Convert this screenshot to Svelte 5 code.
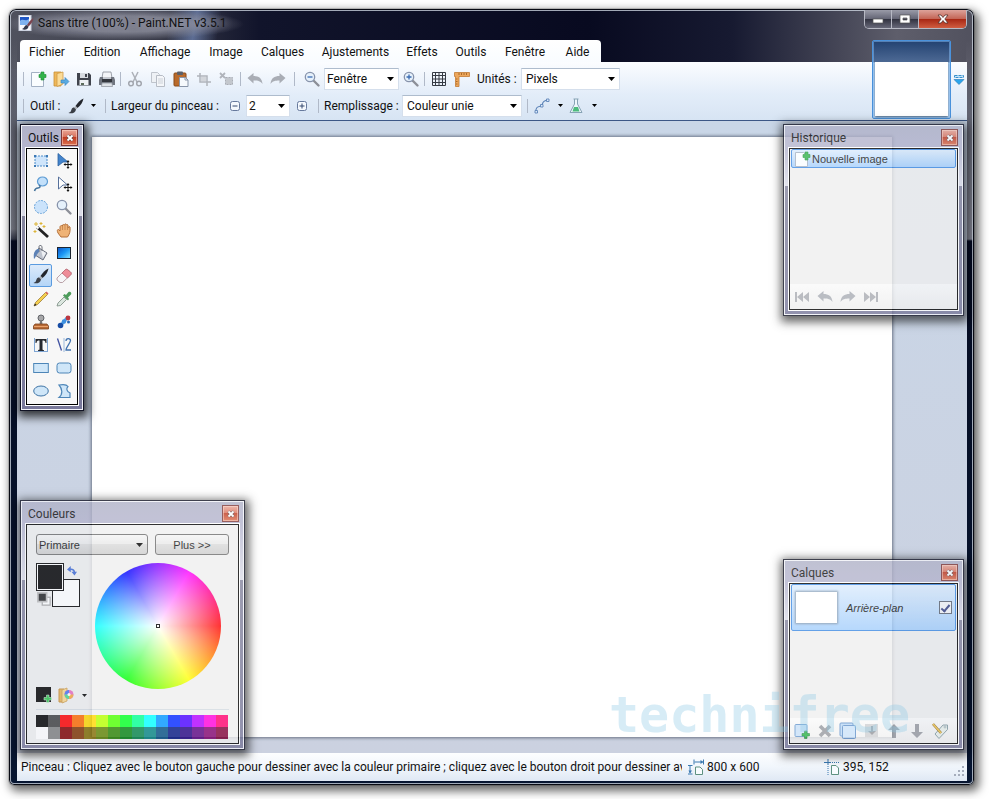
<script lang="ts">
    type Tool = { name: string; icon: string };

    const menus = ['Fichier', 'Edition', 'Affichage', 'Image', 'Calques', 'Ajustements', 'Effets', 'Outils', 'Fenêtre', 'Aide'];

    const tools: Tool[] = [
        { name: 'Sélection rectangulaire', icon: 'rectSelect' },
        { name: 'Déplacer les pixels', icon: 'movePixels' },
        { name: 'Lasso', icon: 'lasso' },
        { name: 'Déplacer la sélection', icon: 'moveSelection' },
        { name: 'Sélection elliptique', icon: 'ellipseSelect' },
        { name: 'Zoom', icon: 'zoom' },
        { name: 'Baguette magique', icon: 'wand' },
        { name: 'Panoramique', icon: 'hand' },
        { name: 'Pot de peinture', icon: 'bucket' },
        { name: 'Dégradé', icon: 'gradient' },
        { name: 'Pinceau', icon: 'brush' },
        { name: 'Gomme', icon: 'eraser' },
        { name: 'Crayon', icon: 'pencil' },
        { name: 'Pipette', icon: 'picker' },
        { name: 'Tampon', icon: 'stamp' },
        { name: 'Recolorer', icon: 'recolor' },
        { name: 'Texte', icon: 'text' },
        { name: 'Ligne ou courbe', icon: 'line' },
        { name: 'Rectangle', icon: 'rect' },
        { name: 'Rectangle arrondi', icon: 'roundRect' },
        { name: 'Ellipse', icon: 'ellipse' },
        { name: 'Forme libre', icon: 'freeform' }
    ];

    const palette = [
        '#000000', '#404040', '#ff0000', '#ff6a00', '#ffd800', '#b6ff00', '#4cff00', '#00ff21',
        '#00ff90', '#00ffff', '#0094ff', '#0026ff', '#4800ff', '#b200ff', '#ff00dc', '#ff006e',
        '#ffffff', '#808080', '#7f0000', '#7f3300', '#7f6a00', '#5b7f00', '#267f00', '#007f0e',
        '#007f46', '#007f7f', '#004a7f', '#00137f', '#21007f', '#57007f', '#7f006e', '#7f0037'
    ];

    const plus = '<path d="M11 1h3v2.500h2v3h-2v2.500h-3v-2.500h-2v-3h2z" fill="#32b44a" stroke="#1c8b32" stroke-width=".6"/>';
    const lens = '<path d="M9.500 9.500l5 5" stroke="#8c8f98" stroke-width="2.400" stroke-linecap="round"/><circle cx="6" cy="6" r="4.700" fill="#e6f1fb" stroke="#8793ab" stroke-width="1.300"/>';
    const cross = '<path d="M12 8v7M8.500 11.500h7" stroke="#111" stroke-width="1"/><path d="M12 7l1.500 2h-3zM12 16l1.500-2h-3zM7.500 11.500l2-1.500v3zM16.500 11.500l-2-1.500v3z" fill="#111"/>';
    const arrowLeft = '<path d="M.5 7l6-5v3c5 0 8.500 2 9 8-2-3-4.500-3.500-9-3.500v3z" fill="#a9adb5"/>';
    const arrowRight = '<path d="M15.500 7l-6-5v3c-5 0-8.500 2-9 8 2-3 4.500-3.500 9-3.500v3z" fill="#a9adb5"/>';
    const brush = '<path d="M15.500.5c-3 1-6 4.500-8 7.500l2 2c3-2.500 5.500-6 6-9.500z" fill="#23262c"/><path d="M7.500 8L6 9.500 8 11.500l1.500-1.500z" fill="#a9adb3"/><path d="M6 9.500c-2.500 0-2.500 2.500-3 3.500-.5 1-1.500 1.500-2.500 2 3 1 7 0 7.500-3.500z" fill="#3b3f46"/>';

    const icons: Record<string, string> = {
        app: '<rect x="1" y=".5" width="12" height="15" fill="#f8f9fc" stroke="#ccd2e0"/><rect x="2" y="2" width="9" height="8" fill="#1f56c4"/><path d="M2 6c3-3 5 1 9-2v6H2z" fill="#7fb3ef"/><path d="M15.500 3c-3 2-5 4.500-6.500 7l1.500 1.500c2.500-2 4.500-5 5-8.500z" fill="#7c4650"/><path d="M9 10c-3 0-2 3-5 4 2 1.500 6 1 6.500-2.500z" fill="#33384a"/>',
        new: '<path d="M1.500 1.500h8l4 4v10h-12z" fill="#fafdff" stroke="#a3b1c4"/>' + plus,
        open: '<path d="M1 1h7v14H1z" fill="#efb85a" stroke="#c98f35" stroke-width=".8"/><path d="M4 2.500l6-1.500v12l-6 2.500z" fill="#fbdc98" stroke="#d09a45" stroke-width=".8"/><path d="M8 9h4V6.500l4 4-4 4V12H8z" fill="#5aaae0" stroke="#2f7fbd" stroke-width=".6"/>',
        save: '<path d="M1 2h12l2 2v10.500H1z" fill="#40444d"/><path d="M4 2h8v5H4z" fill="#d7dbe0"/><path d="M9 3h2v3H9z" fill="#40444d"/><path d="M3.500 9h9v5h-9z" fill="#eef1f4"/><path d="M5 12h3v2H5z" fill="#5c6b5b"/>',
        print: '<path d="M4 1h8l1 6H3z" fill="#f3f5f8" stroke="#868b95" stroke-width=".8"/><path d="M1 6h3v2h8V6h3l1 3v5H0V9z" fill="#70757f"/><path d="M3 8h10v3H3z" fill="#34373e"/><path d="M3 12h10l.5 3.500h-11z" fill="#dfe3e8" stroke="#8a8f99" stroke-width=".7"/>',
        cut: '<path d="M5 1l5 10M11 1L6 11" stroke="#adb1b8" stroke-width="1.500"/><circle cx="4" cy="12.500" r="2.300" fill="none" stroke="#a2a6ae" stroke-width="1.500"/><circle cx="12" cy="12.500" r="2.300" fill="none" stroke="#a2a6ae" stroke-width="1.500"/>',
        copy: '<path d="M1.500 1.500h6l2 2v8h-8z" fill="#eef1f5" stroke="#bfc4cc"/><path d="M6.500 4.500h6l2 2v9h-8z" fill="#f4f6f9" stroke="#b7bcc5"/><path d="M8 8h5M8 10h5M8 12h5" stroke="#ccd1d8"/>',
        paste: '<rect x="1" y="2" width="12" height="13" rx="1" fill="#b96a2b" stroke="#8a4a19"/><rect x="4" y=".5" width="6" height="3.500" rx="1" fill="#5b5f68"/><path d="M6.500 6.500h6l2.500 2.500v6.500H6.500z" fill="#f6f9fc" stroke="#8995a8"/><path d="M12 6.500V9h3" fill="none" stroke="#8995a8"/>',
        crop: '<path d="M4 2v9h11M1 5h10v10" fill="none" stroke="#b0b4bb" stroke-width="1.500"/><path d="M5 6h5v4H5z" fill="#d3d6db"/>',
        deselect: '<path d="M1 2l5 5M6 2L1 7" stroke="#b0b4bb" stroke-width="1.800"/><rect x="6.500" y="6.500" width="7" height="7" fill="#c3c7cd" stroke="#a9adb5" stroke-dasharray="2 1"/>',
        undo: arrowLeft,
        redo: arrowRight,
        zoomOut: lens + '<path d="M3.500 6h5" stroke="#3b6cb3" stroke-width="1.300"/>',
        zoomIn: lens + '<path d="M3.500 6h5M6 3.500v5" stroke="#3b6cb3" stroke-width="1.300"/>',
        grid: '<path d="M1.500 1.500h13v13h-13zM4.500 1v13M8 1v13M11.500 1v13M1 4.500h13M1 8h13M1 11.500h13" fill="none" stroke="#363b44"/>',
        ruler: '<path d="M.5 1.500h15v4H5v10H1.500v-10h-1z" fill="#eda75c" stroke="#c17a33" stroke-width=".8"/><path d="M5 2v2M7.500 2v2M10 2v2M12.500 2v2M2 8h1.500M2 10.500h1.500M2 13h1.500" stroke="#9b5a1c" stroke-width=".8"/>',
        brush,
        curve: '<path d="M2 14C1 7 7 9 8 7.500 9 6 7 3 14 2" fill="none" stroke="#5d84b8" stroke-width="1.200"/><path d="M1 12.500h2.500V15H1zM6.500 6.500H9V9H6.500zM12.500 1H15v2.500h-2.500z" fill="#dceafa" stroke="#5d84b8" stroke-width=".9"/>',
        flask: '<path d="M5.500 1h5M6.500 1v5L2 14.500h12L9.500 6V1" fill="#eef6fb" stroke="#87a3b5"/><path d="M6 9h4l1.500 4.500h-7z" fill="#4dbb7d"/>',
        rectSelect: '<rect x="2" y="3" width="12" height="10" fill="#cfe5fb" stroke="#4b8bc9" stroke-dasharray="2 1"/><path d="M1 2h2v2H1zM13 2h2v2h-2zM1 12h2v2H1zM13 12h2v2h-2z" fill="#3d79b5"/>',
        movePixels: '<path d="M2 .5L12 9H7l-5 4z" fill="#4384cc" stroke="#2b619e" stroke-width=".8"/>' + cross,
        lasso: '<ellipse cx="9.500" cy="5.500" rx="5" ry="4.500" fill="#c3e0fa" stroke="#5d9bd3" stroke-width="1.200"/><path d="M6 9c2 1.500 1 3-1 3s-3 1-3.500 3" fill="none" stroke="#46749c" stroke-width="1.500"/>',
        moveSelection: '<path d="M2.500 1l9 8H7l-4.500 4z" fill="#fff" stroke="#56709b"/>' + cross,
        ellipseSelect: '<circle cx="8" cy="8" r="6.500" fill="#cbe3fb" stroke="#6ca5da" stroke-dasharray="2 1"/>',
        zoom: lens,
        wand: '<path d="M4 5l11 10" stroke="#222" stroke-width="2.800"/><path d="M3.500 4.500l2 2" stroke="#fff" stroke-width="2"/><path d="M3 0v4M1 2h4M8 0v3M6.500 1.500h3M11 3v3M9.500 4.500h3M2 8v3M.5 9.500h3" stroke="#dcb437" stroke-width="1"/>',
        hand: '<path d="M4 9L2.500 7.500C1 7.500 1 9 2 11l3 4h6.500c2-3 3-5 2.500-10-1-1-1.500 0-2 1V3c-1-1-1.500 0-1.500 0-.5-1.500-1.500-1.500-2 0-1-1-2 0-2 0v1C5 3 4 4 4 5z" fill="#efb376" stroke="#b5713a"/><path d="M6.500 4v4M9 3v5M11.500 4v4" stroke="#c38149" stroke-width=".8"/>',
        bucket: '<path d="M6 3l8 5-4 7-8-5z" fill="#bfc4ce" stroke="#696e7b"/><path d="M8 5l5 3-3 5" fill="#eef0f3"/><path d="M6 7V1.500C6 0 9 0 9 2v4" fill="none" stroke="#70757f"/><path d="M6 4C2 4 0 8 1 14c1.500-1 2-4 5-7z" fill="#5d82b6"/>',
        gradient: '<defs><linearGradient id="gr" x1="0" x2="1" y2="1"><stop offset="0" stop-color="#0c50c8"/><stop offset=".5" stop-color="#1b98f5"/><stop offset="1" stop-color="#8ee9ff"/></linearGradient></defs><rect x="1.500" y="2.500" width="13" height="11" fill="url(#gr)" stroke="#1b2430"/>',
        eraser: '<path d="M1 10L9 2c1-1 2-1 3 0l2.500 2c1 1 1 2 0 3l-8 7.500H4L1 12z" fill="#f6f6f8" stroke="#a98c93" stroke-width=".8"/><path d="M6 5l3-3c1-1 2-1 3 0l2.500 2c1 1 1 2 0 3l-3 3z" fill="#ee8c98" stroke="#bd6772" stroke-width=".8"/>',
        pencil: '<path d="M1 15l1.500-3.500L12.500 1.500l2 2L4.500 13.500z" fill="#f5cf4e" stroke="#92702c" stroke-width=".7"/><path d="M12.500 1.500L13.500.5l2 2-1 1z" fill="#da6161"/><path d="M1 15l1-2.500 1.500 1.500z" fill="#222"/>',
        picker: '<path d="M1 15l1-3 6-6 2.500 2.500-6 6z" fill="#dce7e0" stroke="#798a80" stroke-width=".8"/><path d="M7 4.500L12 9.500 13 8l-1-1.500 3-3C16 2 14.500 0 12.500 1L10 4 8.500 3z" fill="#4e9c5c"/>',
        stamp: '<circle cx="8" cy="4" r="3" fill="#a7a7a9" stroke="#63656a"/><path d="M7 6.500h2l.5 4h-3z" fill="#777"/><path d="M2 10h12l1.500 2v3H.5v-3z" fill="#b76a36" stroke="#7f421c" stroke-width=".8"/><path d="M1 12.500h14" stroke="#eaa26b"/>',
        recolor: '<path d="M5 11l6-7" stroke="#4ea2e8" stroke-width="3"/><circle cx="4.500" cy="11.500" r="2.800" fill="#174ca4"/><circle cx="12" cy="4" r="2.400" fill="#bb3740"/><circle cx="8" cy="7.500" r="2.200" fill="#3c8fe0"/><circle cx="12.500" cy="8" r="1.500" fill="#2567b6"/>',
        text: '<path d="M1.500 1v14M14.500 1v14M1 14.500h14" stroke="#7fa6d4"/><path d="M2.500 2h11v4h-1c0-2-1-2.500-3-2.500V12c0 1 .5 1 1.500 1.200v.8H5v-.8c1-.2 1.500-.2 1.500-1.200V3.500c-2 0-3 .5-3 2.500h-1z" fill="#25282e"/>',
        line: '<path d="M1.500 1.500l4 12" stroke="#3d4fa0" stroke-width="1.300"/><path d="M8 1v14" stroke="#9cb9dc"/><path d="M10 4c0-3 4.500-3 4.500-.5C14.500 6 10 10 10 13h5" fill="none" stroke="#4273b0" stroke-width="1.300"/>',
        rect: '<rect x=".7" y="3.500" width="14.600" height="9" fill="#cfe6f8" stroke="#4d85b7"/>',
        roundRect: '<rect x="1" y="3" width="14" height="10" rx="2.500" fill="#cfe6f8" stroke="#4d85b7"/>',
        ellipse: '<ellipse cx="8" cy="8" rx="7.300" ry="5" fill="#cfe6f8" stroke="#3f74a6"/>',
        freeform: '<path d="M3 2c5-1 8 0 9 1.500-2 2-1.500 5 2 6.500v4.500H3C7 11 6.500 6 3 2z" fill="#cfe6f8" stroke="#4d85b7" stroke-width="1.200"/>',
        first: '<path d="M1 3h2v10H1zM9 3v10L3 8zM15 3v10L9 8z" fill="#aaacb2"/>',
        last: '<path d="M13 3h2v10h-2zM7 3v10l6-5zM1 3v10l6-5z" fill="#aaacb2"/>',
        addLayer: '<rect x="1" y="1.500" width="12" height="12" rx="1" fill="#c9e1f8" stroke="#6797cd"/><path d="M10.500 8h2.500v2.500h2.500V13H13v2.500h-2.500V13H8v-2.500h2.500z" fill="#28b447" stroke="#148030" stroke-width=".6"/>',
        delete: '<path d="M3 3l10 10M13 3L3 13" stroke="#989ba1" stroke-width="3.600"/>',
        duplicate: '<rect x="0" y="0" width="13" height="13" rx="1" fill="#bddaf7" stroke="#6292ca"/><rect x="2.500" y="2.500" width="13" height="13" rx="1" fill="#cce3fa" stroke="#6292ca"/>',
        merge: '<path d="M2 1h13v13H2z" fill="#d0d1d4"/><path d="M8 3v5H5l4 4 4-4h-3V3z" fill="#94979c"/>',
        up: '<path d="M8 1l6 6h-4v8H6V7H2z" fill="#989ba1"/>',
        down: '<path d="M8 15l6-6h-4V1H6v8H2z" fill="#989ba1"/>',
        properties: '<path d="M3 11L11 2h4.500v4.500L7 15.500z" fill="#e8f0ea" stroke="#8299a1"/><circle cx="13" cy="4" r="1" fill="#fff" stroke="#8299a1" stroke-width=".7"/><path d="M1 1l8 9" stroke="#90671f" stroke-width="2.600"/><path d="M1 1l8 9" stroke="#f1c84a" stroke-width="1.400"/>',
        addColor: '<path d="M0 0h15v15H0z" fill="#000"/><path d="M10.500 8h2.500v2.500h2.500V13H13v2.500h-2.500V13H8v-2.500h2.500z" fill="#2cc04a" stroke="#d9f7df" stroke-width=".5"/>',
        palette: '<path d="M1 2h5v13H1z" fill="#e9b253" stroke="#c58b33"/><path d="M4 3l5-2v13l-5 2z" fill="#fad88d" stroke="#c99744" stroke-width=".8"/><circle cx="11" cy="7.500" r="4.500" fill="#e96ac0"/><path d="M11 7.500V3a4.500 4.500 0 0 0-4.500 4.500z" fill="#4a70f2"/><path d="M11 7.500H6.500A4.500 4.500 0 0 0 11 12z" fill="#44d98c"/><path d="M11 7.500V12a4.500 4.500 0 0 0 4.500-4.500z" fill="#f4a63c"/><circle cx="11" cy="7.500" r="1.500" fill="#fff"/>',
        size: '<path d="M7.500 8h4.500l2.500 2.500v5h-7z" fill="#f8fcff" stroke="#5e9180"/><path d="M6.500 3h8M6 .5v5M15.500.5v5M2 7v7M0 6.500h4.500M0 15h4.500" stroke="#3b79b0"/><path d="M12.500 1l3 2-3 2zM.5 11.500L2 14.500l2-3z" fill="#3b79b0"/>',
        position: '<path d="M7.500 6.500h4.500l2.500 2.500v6.500h-7z" fill="#f8fcff" stroke="#5e9180"/><path d="M4 0v6M0 3.500h7" stroke="#3b79b0"/><path d="M8 3.500h8M4 7v9" stroke="#3b79b0" stroke-dasharray="1 1"/>',
        swap: '<path d="M4 5.500c4-1 7 1 8 4" fill="none" stroke="#3e69d4" stroke-width="2.500"/><path d="M6 0v10L0 5.500zM7 9h9l-4 6z" fill="#3e69d4"/>',
        reset: '<rect x="6" y="6" width="9" height="9" fill="#fff" stroke="#aaa" stroke-width="1.500"/><rect x="1" y="1" width="10" height="10" fill="#222" stroke="#bbb" stroke-width="2"/>'
    };

    let activeTool = $state('Pinceau');
    let layerVisible = $state(true);
    let zoom = $state('Fenêtre');
    let units = $state('Pixels');
    let brushWidth = $state('2');
    let fill = $state('Couleur unie');
    let slot = $state('Primaire');
</script>

{#snippet icon(name: string)}
    <svg class="icon" viewBox="0 0 16 16" aria-hidden="true">{@html icons[name]}</svg>
{/snippet}

{#snippet iconButton(name: string, label: string)}
    <button class="icon-btn" aria-label={label}>{@render icon(name)}</button>
{/snippet}

{#snippet caret()}
    <svg class="caret" viewBox="0 0 7 4" aria-hidden="true"><path d="M0 0h7L3.500 4z" fill="#000" /></svg>
{/snippet}

{#snippet panelTitle(title: string)}
    <header class="panel-title">
        <h2>{title}</h2>
        <button class="panel-close" aria-label="Fermer {title}">
            <svg viewBox="0 0 8 8"><path d="M1.500 1.500l5 5M6.500 1.500l-5 5" stroke="#534047" stroke-width="3" /><path d="M1.500 1.500l5 5M6.500 1.500l-5 5" stroke="#fff" stroke-width="1.800" /></svg>
        </button>
    </header>
{/snippet}

<div class="desktop">
    <div class="window">
        <header class="titlebar">
            <span class="app-icon">{@render icon('app')}</span>
            <h1>Sans titre (100%) - Paint.NET v3.5.1</h1>
            <div class="window-buttons">
                <button class="win-btn" aria-label="Réduire">
                    <svg viewBox="0 0 14 12"><rect x="2" y="6" width="10" height="4" fill="#fff" stroke="#555" stroke-width=".7" /></svg>
                </button>
                <button class="win-btn" aria-label="Agrandir">
                    <svg viewBox="0 0 14 12"><path d="M2 2h10v8H2zM5 5v2h4V5z" fill="#fff" fill-rule="evenodd" stroke="#555" stroke-width=".7" /></svg>
                </button>
                <button class="win-btn close" aria-label="Fermer">
                    <svg viewBox="0 0 14 12"><path d="M2 2h3l2 2.500L9 2h3L8.800 6l3.200 4H9L7 7.500 5 10H2l3.200-4z" fill="#fff" stroke="#55302c" stroke-width=".8" /></svg>
                </button>
            </div>
        </header>

        <nav class="menu">
            {#each menus as menu}
                <button>{menu}</button>
            {/each}
        </nav>

        <div class="toolbars">
            <div class="toolbar">
                <i class="sep"></i>
                {@render iconButton('new', 'Nouveau')}
                {@render iconButton('open', 'Ouvrir')}
                {@render iconButton('save', 'Enregistrer')}
                {@render iconButton('print', 'Imprimer')}
                <i class="sep"></i>
                {@render iconButton('cut', 'Couper')}
                {@render iconButton('copy', 'Copier')}
                {@render iconButton('paste', 'Coller')}
                {@render iconButton('crop', 'Rogner')}
                {@render iconButton('deselect', 'Désélectionner')}
                <i class="sep"></i>
                {@render iconButton('undo', 'Annuler')}
                {@render iconButton('redo', 'Rétablir')}
                <i class="sep wide"></i>
                {@render iconButton('zoomOut', 'Zoom arrière')}
                <span class="combo zoom-combo">
                    <select bind:value={zoom} aria-label="Zoom"><option>Fenêtre</option><option>100%</option></select>
                    {@render caret()}
                </span>
                {@render iconButton('zoomIn', 'Zoom avant')}
                <i class="sep"></i>
                {@render iconButton('grid', 'Grille')}
                {@render iconButton('ruler', 'Règles')}
                <label class="units-label" for="units">Unités :</label>
                <span class="combo units-combo">
                    <select id="units" bind:value={units}><option>Pixels</option><option>Pouces</option></select>
                    {@render caret()}
                </span>
            </div>
            <div class="toolbar">
                <i class="sep"></i>
                <span class="tool-label">Outil :</span>
                <button class="icon-btn drop" aria-label="Choisir l'outil">{@render icon('brush')}{@render caret()}</button>
                <i class="sep wide"></i>
                <label class="width-label" for="brush-width">Largeur du pinceau :</label>
                <button class="icon-btn" aria-label="Diminuer">
                    <svg class="step" viewBox="0 0 10 10"><rect x=".5" y=".5" width="9" height="9" rx="2" fill="#f4f8fd" stroke="#66799c" /><path d="M2.500 5h5" stroke="#34496f" /></svg>
                </button>
                <span class="combo width-combo">
                    <select id="brush-width" bind:value={brushWidth}><option>1</option><option>2</option><option>3</option></select>
                    {@render caret()}
                </span>
                <button class="icon-btn" aria-label="Augmenter">
                    <svg class="step" viewBox="0 0 10 10"><rect x=".5" y=".5" width="9" height="9" rx="2" fill="#f4f8fd" stroke="#66799c" /><path d="M2.500 5h5M5 2.500v5" stroke="#34496f" /></svg>
                </button>
                <i class="sep wide"></i>
                <label class="fill-label" for="fill">Remplissage :</label>
                <span class="combo fill-combo">
                    <select id="fill" bind:value={fill}><option>Couleur unie</option><option>Hachures</option></select>
                    {@render caret()}
                </span>
                <i class="sep wide"></i>
                <button class="icon-btn drop narrow" aria-label="Anticrénelage">{@render icon('curve')}{@render caret()}</button>
                <button class="icon-btn drop narrow" aria-label="Mode de fusion">{@render icon('flask')}{@render caret()}</button>
            </div>
        </div>

        <div class="image-strip">
            <button class="thumbnail" aria-label="Sans titre"><span></span></button>
            <button class="image-list" aria-label="Liste des images">
                <svg viewBox="0 0 12 10"><path d="M1.500.5h9v2h-9z" fill="#bfe3fb" stroke="#378fcb" stroke-dasharray="3 1" /><path d="M1 4.500h10L6 9.500z" fill="#2ba5ec" stroke="#2173b3" stroke-width=".6" /></svg>
            </button>
        </div>

        <main class="workspace">
            <div class="paper"></div>

            <section class="panel tools-panel">
                {@render panelTitle('Outils')}
                <div class="panel-body tools">
                    {#each tools as tool}
                        <button
                            class="tool"
                            class:active={activeTool === tool.name}
                            aria-label={tool.name}
                            onclick={() => (activeTool = tool.name)}
                        >{@render icon(tool.icon)}</button>
                    {/each}
                </div>
            </section>

            <section class="panel history-panel">
                {@render panelTitle('Historique')}
                <div class="panel-body">
                    <button class="history-item">{@render icon('new')}Nouvelle image</button>
                    <div class="panel-tools">
                        {@render iconButton('first', 'Tout annuler')}
                        {@render iconButton('undo', 'Annuler')}
                        {@render iconButton('redo', 'Rétablir')}
                        {@render iconButton('last', 'Tout rétablir')}
                    </div>
                </div>
            </section>

            <section class="panel colors-panel">
                {@render panelTitle('Couleurs')}
                <div class="panel-body colors">
                    <div class="color-row">
                        <span class="combo slot-combo">
                            <select bind:value={slot} aria-label="Couleur active"><option>Primaire</option><option>Secondaire</option></select>
                            {@render caret()}
                        </span>
                        <button class="more">Plus &gt;&gt;</button>
                    </div>
                    <div class="color-main">
                        <div class="color-side">
                            <div class="swatches">
                                <button class="secondary" aria-label="Couleur secondaire"></button>
                                <button class="primary" aria-label="Couleur primaire"></button>
                                <button class="swap" aria-label="Permuter">{@render icon('swap')}</button>
                                <button class="reset" aria-label="Noir et blanc">{@render icon('reset')}</button>
                            </div>
                            <div class="color-actions">
                                {@render iconButton('addColor', 'Ajouter la couleur')}
                                <button class="icon-btn drop narrow" aria-label="Palettes">{@render icon('palette')}{@render caret()}</button>
                            </div>
                        </div>
                        <div class="wheel"><span class="wheel-mark"></span></div>
                    </div>
                    <div class="palette">
                        {#each palette as color}
                            <button style="background: {color}" aria-label={color}></button>
                        {/each}
                    </div>
                </div>
            </section>

            <section class="panel layers-panel">
                {@render panelTitle('Calques')}
                <div class="panel-body">
                    <label class="layer">
                        <span class="layer-thumb"></span>
                        <em>Arrière-plan</em>
                        <input type="checkbox" bind:checked={layerVisible} />
                    </label>
                    <div class="panel-tools">
                        {@render iconButton('addLayer', 'Ajouter un calque')}
                        {@render iconButton('delete', 'Supprimer le calque')}
                        {@render iconButton('duplicate', 'Dupliquer le calque')}
                        {@render iconButton('merge', 'Fusionner')}
                        {@render iconButton('up', 'Monter')}
                        {@render iconButton('down', 'Descendre')}
                        {@render iconButton('properties', 'Propriétés')}
                    </div>
                </div>
            </section>

            <span class="watermark">technifree</span>
        </main>

        <footer class="status">
            <p>Pinceau : Cliquez avec le bouton gauche pour dessiner avec la couleur primaire ; cliquez avec le bouton droit pour dessiner av</p>
            <span class="status-item">{@render icon('size')}800 x 600</span>
            <span class="status-item">{@render icon('position')}395, 152</span>
            <svg class="grip" viewBox="0 0 11 11"><path d="M8 0h2v2H8zM8 4h2v2H8zM8 8h2v2H8zM4 4h2v2H4zM4 8h2v2H4zM0 8h2v2H0z" fill="#a5adbc" /></svg>
        </footer>
    </div>
</div>

<style>
    :global(body) {
        background: #fff;
    }

    .desktop {
        box-sizing: border-box;
        min-height: 100vh;
        padding: 9px 15px 14px 9px;
        display: flex;
        font-family: Roboto, "Noto Sans", sans-serif;
        font-size: 12px;
        line-height: 16px;
        color: #111;
    }

    button, select, input {
        margin: 0;
        padding: 0;
        border: 0;
        background: none;
        font: inherit;
        color: inherit;
    }

    h1, h2, p {
        margin: 0;
        font-size: 12px;
        font-weight: normal;
    }

    .icon {
        display: block;
        flex: none;
        width: 16px;
        height: 16px;
        overflow: visible;
    }

    .window {
        position: relative;
        flex: 1;
        min-width: 0;
        box-sizing: border-box;
        display: flex;
        flex-direction: column;
        padding: 0 7px 4px 8px;
        border-radius: 7px 7px 5px 5px;
        background:
            linear-gradient(180deg, transparent 31px, rgba(185, 185, 190, .5) 220px, transparent 232px) left / 8px 100% no-repeat,
            linear-gradient(180deg, transparent 31px, rgba(190, 190, 200, .6) 230px, transparent 232px) right / 8px 100% no-repeat,
            radial-gradient(ellipse 120px 16px at 115px 15px, rgba(140, 142, 156, .8) 50%, transparent) top / 100% 40px no-repeat,
            linear-gradient(100deg, transparent 160px, rgba(126, 152, 205, .6) 186px, transparent 210px) top / 100% 40px no-repeat,
            linear-gradient(90deg, #50525e 0, #393b49 150px, #11142b 250px, #080a20 60%, #171a31 75%, #5e5e6b 92%, #51515e) top / 100% 60px no-repeat,
            linear-gradient(180deg, #505361 60px, #292e40 230px, #050c22 232px, #071632);
        box-shadow:
            inset 0 0 0 1px #080a13,
            inset 0 0 0 2px rgba(213, 221, 232, .75),
            0 0 0 1px rgba(0, 0, 0, .15),
            3px 4px 10px 2px rgba(0, 0, 0, .6);
    }

    .titlebar {
        display: flex;
        align-items: flex-start;
        height: 31px;
    }

    .app-icon {
        padding: 6px 4px 0 1px;
    }

    .titlebar h1 {
        flex: 1;
        padding-top: 6px;
        text-shadow: 0 0 8px #a8a9b8;
    }

    .window-buttons {
        display: flex;
        margin-top: 1px;
        border: 1px solid #b7b9c4;
        border-top: 0;
        border-radius: 0 0 5px 5px;
        overflow: hidden;
    }

    .win-btn {
        display: grid;
        place-items: center;
        width: 27px;
        height: 18px;
        border-right: 1px solid #b7b9c4;
        background: linear-gradient(#9a9ba8, #656676 48%, #30313f 50%, #686979);
    }

    .win-btn.close {
        width: 47px;
        border-right: 0;
        background: linear-gradient(#dda39b, #c46657 48%, #a72613 50%, #d05d41);
    }

    .win-btn svg {
        width: 14px;
        height: 12px;
    }

    .menu {
        align-self: flex-start;
        box-sizing: border-box;
        display: grid;
        grid-template-columns: 54px 56px 70px 52px 61px 85px 48px 50px 58px 47px;
        height: 22px;
        margin-left: 3px;
        padding-top: 1px;
        border-radius: 4px 4px 0 0;
        background: linear-gradient(#fff, #f9fcff);
    }

    .menu button {
        white-space: nowrap;
    }

    .toolbars {
        box-sizing: border-box;
        padding: 3px 0 0 4px;
        height: 59px;
        border-bottom: 1px solid #3c5786;
        background: linear-gradient(#fbfdff, #e3edf9 55%, #d7e4f3);
    }

    .toolbar {
        display: flex;
        align-items: center;
        height: 27px;
        white-space: nowrap;
    }

    .sep {
        flex: none;
        width: 1px;
        height: 14px;
        margin: 0 2px;
        background: #b0b9c8;
    }

    .sep.wide {
        margin: 0 5px;
    }

    .icon-btn {
        flex: none;
        display: grid;
        place-items: center;
        width: 23px;
        height: 22px;
    }

    .icon-btn.drop {
        grid-auto-flow: column;
        justify-content: space-between;
        width: 36px;
        padding: 0 4px;
    }

    .icon-btn.drop.narrow {
        width: 34px;
        padding: 0 4px 0 1px;
    }

    .caret {
        width: 7px;
        height: 4px;
    }

    .drop .caret {
        width: 5px;
        height: 3px;
    }

    .step {
        width: 10px;
        height: 10px;
    }

    .combo {
        flex: none;
        display: grid;
        align-items: center;
        box-sizing: border-box;
        height: 22px;
        border: 1px solid #d5dfec;
        border-top-color: #aebccd;
        background: #fff;
    }

    .combo select {
        grid-area: 1 / 1;
        width: 100%;
        height: 100%;
        padding-left: 2px;
        appearance: none;
    }

    .combo .caret {
        grid-area: 1 / 1;
        justify-self: end;
        margin-right: 4px;
        pointer-events: none;
    }

    .zoom-combo {
        width: 75px;
        margin-left: 1px;
    }

    .units-label {
        width: 44px;
        padding-left: 4px;
    }

    .units-combo {
        width: 99px;
    }

    .tool-label {
        width: 34px;
        padding-left: 4px;
    }

    .width-label {
        width: 112px;
    }

    .width-combo {
        width: 44px;
    }

    .fill-label {
        width: 78px;
    }

    .fill-combo {
        width: 120px;
    }

    .units-combo select,
    .fill-combo select {
        padding-left: 4px;
    }

    .image-strip {
        position: absolute;
        top: 31px;
        right: 9px;
        display: flex;
        align-items: center;
        gap: 2px;
    }

    .thumbnail {
        box-sizing: border-box;
        display: flex;
        width: 79px;
        height: 79px;
        padding: 21px 2px 2px;
        border: 1px solid #4a92dc;
        border-radius: 2px;
        background: linear-gradient(rgba(25, 62, 115, .85), rgba(75, 108, 156, .85) 21px, #acd0f3 22px, #b8d8f8);
        box-shadow: inset 0 0 0 1px rgba(135, 190, 245, .5);
    }

    .thumbnail span {
        flex: 1;
        align-self: stretch;
        background: #fff;
        box-shadow: 0 1px 2px #47627f;
    }

    .image-list {
        width: 12px;
        height: 10px;
    }

    .image-list svg {
        display: block;
    }

    .workspace {
        position: relative;
        z-index: 1;
        flex: 1;
        display: grid;
        place-items: center;
        min-height: 632px;
        background: linear-gradient(#c9d6e7, #cbd1e0);
    }

    .paper {
        width: 800px;
        height: 600px;
        background: #fff;
        box-shadow: 0 0 3px 1px rgba(50, 60, 80, .65);
    }

    .panel {
        position: absolute;
        box-sizing: border-box;
        display: flex;
        flex-direction: column;
        padding: 2px 5px 5px;
        border: 1px solid #101223;
        background: linear-gradient(#b0b2c8, #b5b5ce 24px, #dcdde8 32%, #85859e 32%, #78789a);
        box-shadow: inset 0 0 0 1px #f1f2f7, 1px 3px 9px 3px rgba(0, 0, 0, .75);
        opacity: .8;
    }

    .tools-panel {
        top: 3px;
        left: 3px;
        width: 64px;
        opacity: 1;
    }

    .history-panel {
        top: 3px;
        right: 3px;
        width: 181px;
        height: 192px;
    }

    .colors-panel {
        bottom: 3px;
        left: 3px;
        width: 225px;
        height: 250px;
    }

    .layers-panel {
        right: 3px;
        bottom: 3px;
        width: 181px;
        height: 191px;
    }

    .panel-title {
        display: flex;
        align-items: center;
        justify-content: space-between;
        height: 21px;
        padding-left: 2px;
    }

    .panel-close {
        flex: none;
        display: grid;
        place-items: center;
        width: 17px;
        height: 17px;
        border: 1px solid #7e3838;
        background: linear-gradient(#e8a597, #d9705a 48%, #bf3b22 50%, #dd7252);
        box-shadow: inset 0 0 0 1px rgba(255, 220, 205, .5);
    }

    .panel-close svg {
        width: 8px;
        height: 8px;
    }

    .panel-body {
        flex: 1;
        display: flex;
        flex-direction: column;
        border: 1px solid #000;
        background: #efefef;
        box-shadow: 0 0 0 1px #fff;
        font-family: "Liberation Sans", Arial, sans-serif;
        font-size: 11px;
    }

    .panel-body.tools {
        display: grid;
        grid-template-columns: 23px 23px;
        justify-content: center;
        padding-bottom: 2px;
        background: #f7f7f7;
    }

    .tool {
        box-sizing: border-box;
        display: grid;
        place-items: center;
        width: 23px;
        height: 23px;
    }

    .tool.active {
        border: 1px solid #5a9be0;
        border-radius: 2px;
        background: linear-gradient(#dceafa, #b4d5f7);
    }

    .history-item,
    .layer {
        box-sizing: border-box;
        display: flex;
        align-items: center;
        margin: 0 1px;
        border: 1px solid #3e8ae3;
        border-radius: 2px;
        background: linear-gradient(#dcecfd, #a5cffc);
    }

    .history-item {
        gap: 2px;
        height: 19px;
        padding-left: 2px;
    }

    .layer {
        height: 47px;
        padding: 0 3px 0 4px;
    }

    .layer-thumb {
        width: 41px;
        height: 31px;
        background: #fff;
        box-shadow: 0 0 2px 1px #7d93aa;
    }

    .layer em {
        flex: 1;
        padding-left: 9px;
    }

    .layer input {
        display: grid;
        place-items: center;
        width: 13px;
        height: 13px;
        border: 1px solid #5d6470;
        background: #f2f4f7;
        appearance: none;
    }

    .layer input:checked::before {
        content: "";
        width: 3px;
        height: 7px;
        border: solid #333f80;
        border-width: 0 2px 2px 0;
        transform: rotate(40deg);
    }

    .panel-tools {
        display: flex;
        align-items: center;
        margin-top: auto;
        height: 25px;
        background: linear-gradient(#fafafa, #efefef);
    }

    .colors {
        padding: 9px 9px 4px;
    }

    .color-row {
        display: flex;
        gap: 7px;
        height: 21px;
    }

    .slot-combo,
    .more {
        box-sizing: border-box;
        height: 21px;
        border: 1px solid #6d6d6d;
        border-radius: 3px;
        background: linear-gradient(#f4f4f4, #e9e9e9 48%, #dadada 50%, #cecece);
    }

    .slot-combo {
        width: 112px;
    }

    .more {
        flex: 1;
    }

    .color-main {
        display: flex;
        justify-content: space-between;
        height: 146px;
        margin-top: 8px;
        padding-right: 8px;
        border-bottom: 1px solid #d3dae1;
    }

    .color-side {
        display: flex;
        flex-direction: column;
        justify-content: space-between;
        padding-bottom: 3px;
    }

    .swatches {
        display: grid;
        grid-template-columns: 16px 12px 16px;
        grid-template-rows: 16px 12px 16px;
    }

    .primary,
    .secondary {
        border: 1px solid #000;
        box-shadow: inset 0 0 0 1px #fff;
    }

    .primary {
        grid-area: 1 / 1 / 3 / 3;
        background: #000;
    }

    .secondary {
        grid-area: 2 / 2 / 4 / 4;
        background: #fff;
    }

    .swap,
    .reset {
        display: grid;
        place-items: center;
    }

    .swap {
        grid-area: 1 / 3;
    }

    .swap .icon {
        width: 10px;
        height: 10px;
    }

    .reset {
        grid-area: 3 / 1;
    }

    .reset .icon {
        width: 14px;
        height: 14px;
    }

    .color-actions {
        display: flex;
    }

    .color-actions .icon-btn:first-child {
        justify-items: start;
        width: 21px;
    }

    .wheel {
        display: grid;
        place-items: center;
        width: 126px;
        height: 126px;
        border-radius: 50%;
        background:
            radial-gradient(circle closest-side, #fff, rgba(255, 255, 255, 0)),
            conic-gradient(from 90deg, #f00, #ff0, #0f0, #0ff, #00f, #f0f, #f00);
    }

    .wheel-mark {
        width: 2px;
        height: 2px;
        border: 1px solid #000;
        background: #fff;
    }

    .palette {
        display: grid;
        grid-template-columns: repeat(16, 12px);
        grid-auto-rows: 12px;
        margin-top: 5px;
    }

    .watermark {
        position: absolute;
        right: 57px;
        bottom: 16px;
        font-family: "DejaVu Sans Mono", monospace;
        font-weight: bold;
        font-size: 50px;
        line-height: 44px;
        color: rgba(140, 200, 230, .35);
        pointer-events: none;
    }

    .status {
        display: flex;
        align-items: center;
        height: 28px;
        padding: 0 2px 0 4px;
        background: linear-gradient(#fdfeff, #f1f6fc 50%, #dfe8f4);
    }

    .status p {
        flex: 1;
        min-width: 0;
        overflow: hidden;
        white-space: nowrap;
    }

    .status-item {
        display: flex;
        align-items: center;
        gap: 3px;
        width: 130px;
        padding-left: 6px;
        white-space: nowrap;
    }

    .grip {
        align-self: flex-end;
        width: 11px;
        height: 11px;
        padding-bottom: 4px;
    }
</style>
